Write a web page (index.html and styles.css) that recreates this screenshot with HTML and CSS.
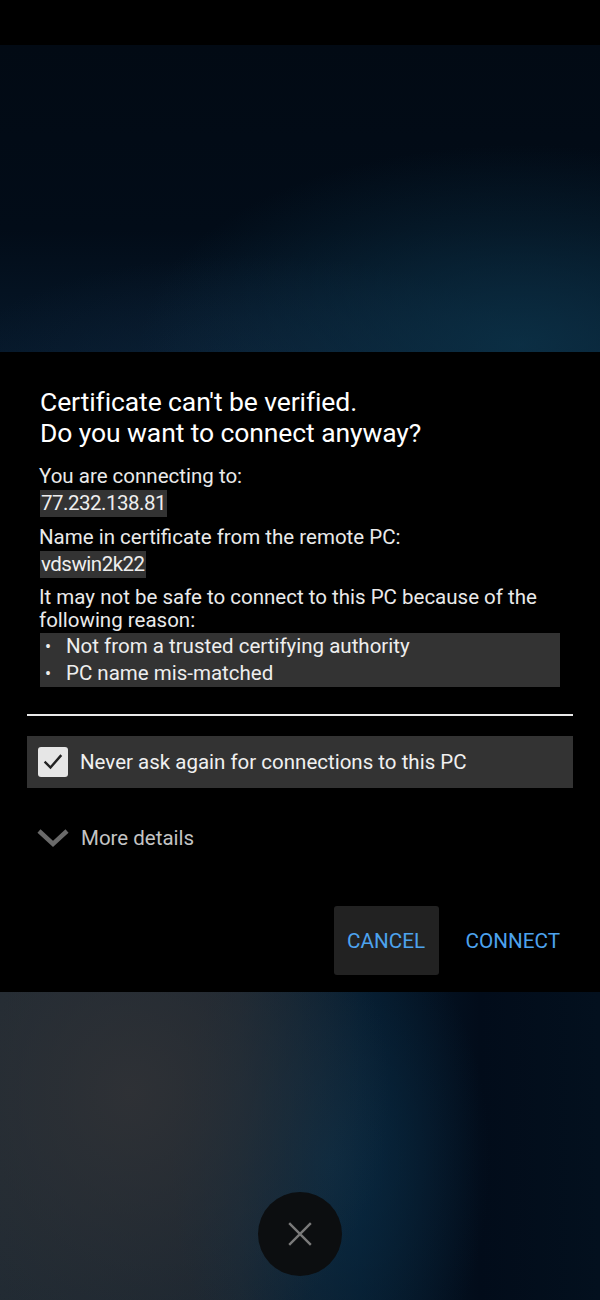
FILE: index.html
```html
<!DOCTYPE html>
<html lang="en">
<head>
<meta charset="utf-8">
<title>Certificate</title>
<link rel="stylesheet" href="styles.css">
</head>
<body>
<div class="screen">
  <div class="statusbar"></div>
  <div class="bg-top"></div>
  <div class="dialog">
    <h1 class="title">Certificate can't be verified.<br>Do you want to connect anyway?</h1>
    <p class="label">You are connecting to:</p>
    <div class="value"><span class="hl">77.232.138.81</span></div>
    <p class="label">Name in certificate from the remote PC:</p>
    <div class="value"><span class="hl">vdswin2k22</span></div>
    <p class="label reason">It may not be safe to connect to this PC because of the following reason:</p>
    <ul class="reasons">
      <li>Not from a trusted certifying authority</li>
      <li>PC name mis-matched</li>
    </ul>
    <div class="divider"></div>
    <div class="check-row">
      <span class="checkbox">
        <svg viewBox="0 0 30 30" width="30" height="30"><path d="M7.5 15.5 L12.5 20.5 L22.5 9" fill="none" stroke="#222" stroke-width="2.4" stroke-linecap="square"/></svg>
      </span>
      <span class="check-text">Never ask again for connections to this PC</span>
    </div>
    <div class="more">
      <svg class="chev" viewBox="0 0 34 20" width="34" height="20"><path d="M3 3 L17 16 L31 3" fill="none" stroke="#6a6a6a" stroke-width="4.5"/></svg>
      <span>More details</span>
    </div>
    <div class="actions">
      <button class="btn btn-cancel">CANCEL</button>
      <button class="btn btn-connect">CONNECT</button>
    </div>
  </div>
  <div class="bg-bottom">
    <div class="close">
      <svg viewBox="0 0 24 24" width="26" height="26"><path d="M2 2 L22 22 M22 2 L2 22" stroke="#7a7a7a" stroke-width="2.2" fill="none"/></svg>
    </div>
  </div>
</div>
</body>
</html>
```
FILE: styles.css
```css
* { box-sizing: border-box; }
html, body { margin: 0; padding: 0; background: #000; }
body { font-family: Roboto, "Noto Sans", sans-serif; color: #f0f0f0; }
.screen { width: 600px; height: 1300px; display: flex; flex-direction: column; overflow: hidden; }
.statusbar { height: 45px; background: #000; flex: none; }
.bg-top {
  height: 307px; flex: none;
  background:
    radial-gradient(ellipse 380px 200px at 520px 300px, rgba(12,50,72,0.85), rgba(12,50,72,0) 100%),
    radial-gradient(ellipse 300px 120px at 250px 330px, rgba(14,36,58,0.7), rgba(14,36,58,0) 100%),
    linear-gradient(180deg, #020a14 0%, #020c18 60%, #06182a 100%);
}
.dialog {
  height: 640px; flex: none; background: #000;
  padding: 34px 27px 0 27px;
  display: flex; flex-direction: column;
}
.title {
  margin: 0 0 16px 13px; font-weight: 400; font-size: 26.5px; line-height: 31px; color: #fff; letter-spacing: -0.1px;
}
.label { margin: 0 0 0 12px; font-size: 20.5px; line-height: 24px; color: #eaeaea; }
.value { margin: 2px 0 7px 13px; line-height: 27px; height: 28px; }
.hl { background: #333; display: inline-block; font-size: 20.5px; line-height: 27px; padding: 0 1px 0 1px; color: #eee; letter-spacing: -0.5px; }
.reason { line-height: 23px; }
.reasons {
  list-style: none; margin: 1px 0 0 13px; padding: 0; background: #333; width: 520px;
}
.reasons li { font-size: 20.5px; line-height: 27px; padding-left: 26px; position: relative; color: #eee; }
.reasons li::before { content: "•"; position: absolute; left: 5px; top: 0; font-size: 18px; }
.divider { height: 2px; background: #e8e8e8; margin-top: 27px; }
.check-row {
  margin-top: 20px; height: 52px; background: #333; display: flex; align-items: center; padding-left: 11px;
}
.checkbox {
  width: 30px; height: 30px; background: #e6e6e6; border-radius: 3px; display: flex; flex: none;
}
.check-text { margin-left: 12px; font-size: 20.5px; color: #f0f0f0; }
.more { margin-top: 35px; display: flex; align-items: center; padding-left: 9px; height: 30px; }
.more span { margin-left: 11px; font-size: 20.5px; color: #c4c4c4; }
.chev { flex: none; }
.actions { margin-top: 53px; display: flex; justify-content: flex-end; align-items: center; gap: 13px; }
.btn {
  font-family: Roboto, "Noto Sans", sans-serif; font-size: 20.7px; color: #4da3ee; border: 0; background: transparent;
  height: 69px; letter-spacing: 0; cursor: pointer;
}
.btn-cancel { background: #222; border-radius: 3px; width: 105px; padding: 0; }
.btn-connect { padding: 0 13px 0 14px; }
.bg-bottom {
  flex: 1; position: relative;
  background:
    radial-gradient(ellipse 260px 280px at 130px 100px, rgba(48,50,54,0.9), rgba(48,50,54,0) 100%),
    radial-gradient(ellipse 160px 260px at 330px 170px, rgba(10,45,70,0.8), rgba(10,45,70,0) 100%),
    linear-gradient(90deg, #202a33 0%, #1a2530 40%, #061a2c 60%, #020c1a 80%, #03101e 100%);
}
.close {
  position: absolute; left: 258px; top: 200px; width: 84px; height: 84px; border-radius: 50%;
  background: #0c0e10; display: flex; align-items: center; justify-content: center;
}
```
